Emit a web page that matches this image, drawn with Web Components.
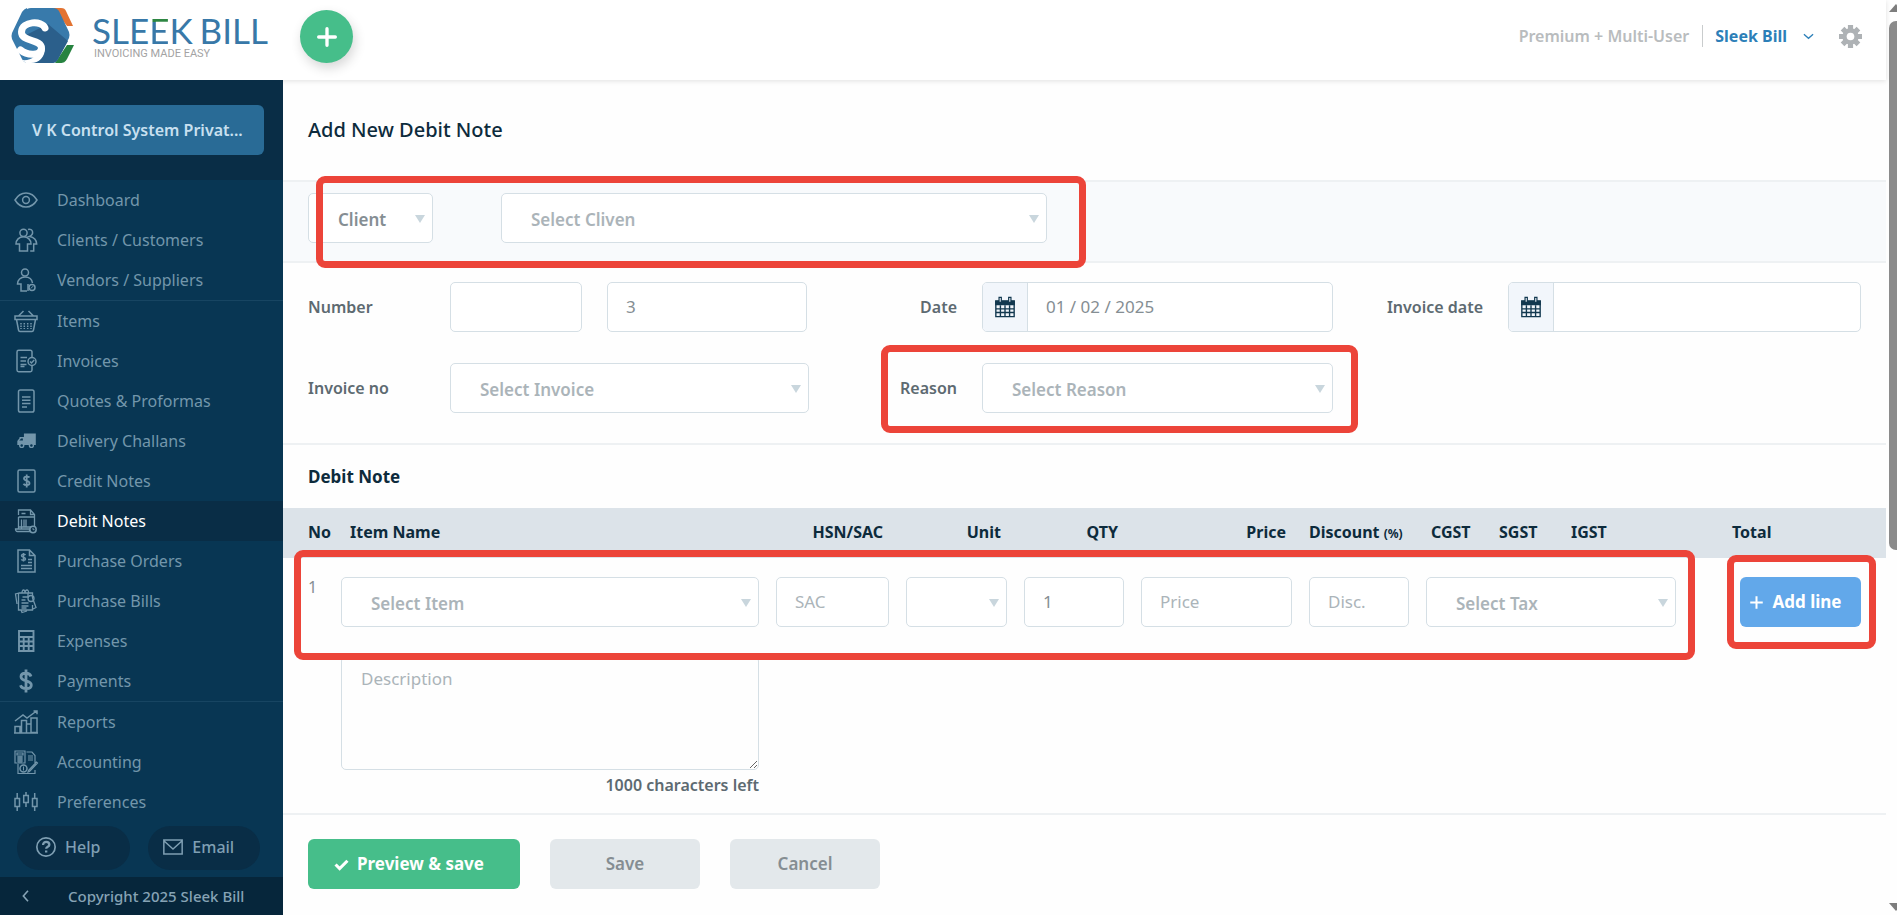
<!DOCTYPE html>
<html lang="en">
<head>
<meta charset="utf-8">
<title>Sleek Bill - Add New Debit Note</title>
<style>
    html {
        --navy: #083653;
        --navy-dark: #092d46;
        --line: #eef1f3;
        --ink: #0d2b3c;
        --muted: #5d6a71;
        --field-text: #858e93;
        --placeholder: #abb4b9;
        --field-border: #d5dfe5;
    }
    body {
        margin: 0;
        font: 16px/24px "Noto Sans", "Open Sans", sans-serif;
        color: var(--ink);
        background: #fefefe;
    }
</style>
</head>
<body>
<app-shell>
    <top-bar slot="header" plan="Premium + Multi-User" user="Sleek Bill"></top-bar>
    <side-nav slot="nav" company="V K Control System Privat...">
        <nav-item icon="eye">Dashboard</nav-item>
        <nav-item icon="clients">Clients / Customers</nav-item>
        <nav-item icon="vendor">Vendors / Suppliers</nav-item>
        <nav-item icon="basket" divided>Items</nav-item>
        <nav-item icon="invoice">Invoices</nav-item>
        <nav-item icon="quote">Quotes &amp; Proformas</nav-item>
        <nav-item icon="truck">Delivery Challans</nav-item>
        <nav-item icon="credit">Credit Notes</nav-item>
        <nav-item icon="debit" active>Debit Notes</nav-item>
        <nav-item icon="order">Purchase Orders</nav-item>
        <nav-item icon="bill">Purchase Bills</nav-item>
        <nav-item icon="calculator">Expenses</nav-item>
        <nav-item icon="dollar">Payments</nav-item>
        <nav-item icon="reports" divided>Reports</nav-item>
        <nav-item icon="accounting">Accounting</nav-item>
        <nav-item icon="sliders">Preferences</nav-item>
    </side-nav>
    <debit-form></debit-form>
</app-shell>

<script>
const ICONS = {
    eye: '<path d="M1 12C4 7 8 5 12 5s8 2 11 7c-3 5-7 7-11 7s-8-2-11-7z"/><circle cx="12" cy="12" r="3.4"/>',
    clients: '<circle cx="9.5" cy="4.8" r="3.6"/><path d="M5.5 23v-7H2c0-4 3-7.200 7.500-7.200S17 12 17 16h-3.500v7zM14 1.500c5-1.500 6.500 5 1.500 6.900 4 .6 7 3.400 7.200 7.600h-3v7h-3.500"/>',
    vendor: '<circle cx="11" cy="4.500" r="3.500"/><path d="M13 23H7v-7H3.500c0-4 3-7 7.500-7s7 2.500 7.500 6M14 16v7"/><circle cx="18" cy="19.500" r="3"/><path d="M16.800 20.500l2.400-2.400" stroke-width="1"/>',
    basket: '<path d="M1 7h22v3.500H1zM2.500 10.500l2 10.500c.2 1 .8 1.500 1.500 1.500h12c.7 0 1.300-.5 1.500-1.500l2-10.500M4.500 7l5-5M19.500 7l-5-5"/><path d="M7 14v6M10.300 14v6M13.700 14v6M17 14v6" stroke-dasharray="1.500 1"/>',
    invoice: '<path d="M18 8V3c0-1.200-.6-1.700-1.700-1.700H4.700C3.600 1.300 3 1.800 3 3v18c0 1.200.6 1.700 1.700 1.700h11.600c1.100 0 1.700-.5 1.700-1.700v-4M6.500 8.500H13M6.500 12H12M6.500 15.500H12.500M6.500 17.500h4"/><circle cx="18" cy="12.500" r="4"/><path d="M16 12.500l1.500 1.500 2.700-3"/>',
    quote: '<rect x="4.500" y="1" width="15.500" height="22" rx="1.800"/><path d="M8 8h8.500M8 11.300h8.500M8 14.600h8.500M8 18h5"/>',
    truck: '<g transform="translate(2 1) scale(.88)" stroke="none"><path d="M9 4h13.500v13H9zM4 8h5v9H4zM1.500 17v-4.500L5 8h4v9z" fill="currentColor"/><path d="M3.800 12l2-2.300h2V12z" fill="var(--navy)"/><circle cx="6.500" cy="17.500" r="3" fill="currentColor"/><circle cx="17.500" cy="17.500" r="3" fill="currentColor"/><circle cx="6.500" cy="17.500" r="1.400" fill="var(--navy)"/><circle cx="17.500" cy="17.500" r="1.400" fill="var(--navy)"/></g>',
    credit: '<rect x="4" y="1" width="17" height="22" rx="1.500"/><path d="M15.500 8.500c-.8-1.300-5.500-1.500-5.500 1 0 3 5.500 1.500 5.500 4.700 0 2.600-5 2.300-6 .5M12.700 5.500v13" stroke-width="1.800"/>',
    debit: '<path d="M4.500 6V1h12l4 4.500V18M16.500 1v4.500h4M4.500 8v12M4.500 8h16M7.500 10.500v9M10 10.500v7M4.500 18h13M7.500 4.500h4M1.500 20h14v2.500H3.500C2 22.500 1.500 21 1.500 20zM12 10.500V18" stroke-width="1.300"/><circle cx="19" cy="20.500" r="3.200"/><path d="M19 18.800v1.900h1.500" stroke-width="1"/>',
    order: '<path d="M4 1h11.500l5.500 5.500V23H4zM15.500 1v5.500H21M14 10.500h4M14 13.500h4M7 16.500h11M7 19.500h11M11.500 6c-1-1.200-4-.8-4 .8 0 2 4 1 4 3.200 0 1.800-3.300 1.700-4.200.4M9.500 4v8.500"/>',
    bill: '<path d="M5 4l-3.500 1L3 15M4.500 4h14v5M4.500 4v17h14v-5M18.500 9l3.500 9.500-3 1.500M7 21l1 2.500 5-1.500M8 4c0-4 3-4 3 0 0-4 4-4 3.500 0M8.500 8H14V4M7.500 14h7M7.500 17h7M7.500 19h5M7.500 11h4" stroke-width="1.300"/><circle cx="17" cy="9.500" r="3" stroke-width="1.300"/>',
    calculator: '<path d="M5 2h14.500v20H5zM5 8h14.500M9.700 8v14M14.700 8v14M5 12.500h14.500M5 17h14.500" stroke-width="1.900"/>',
    dollar: '<path d="M17 7.500C15.500 3 7 3.300 7 7.700c0 5.300 10.300 3 10.300 8.300 0 4.800-9.300 4.800-10.800.2M12 .5v23" stroke-width="2.800"/>',
    reports: '<path d="M1 22.500V16.500h5v6M7.500 22.500V10.500h5v12M12.500 14H17v8.500M17 22.500V8h6v14.500zM0 23h24M1 11l8-6 4 3 9.500-7M19.500 1H23v3.300"/>',
    accounting: '<path d="M1 1h10v12H1zM3 3h6v2H3zM3 7h6M3 9h6M3 11h6M5 6v7M7 6v7M12.500 2H18l3 3.500V13M14 6h5M14 8h5M14 10h5M4 14v9.500h17V20M14.500 20.500L22.500 12l1 1-8 8.500-1.500.5z" stroke-width="1.200"/><circle cx="9.500" cy="18.500" r="3.500"/><path d="M9.500 16.500v4" stroke-width="1"/>',
    sliders: '<path d="M1 8.500h4.500v8H1zM9.700 5.500h4.600v7H9.700zM18.500 8.500H23v8h-4.500zM3.200 3v5.500M3.200 16.500V21M12 2v3.500M12 12.500V17M20.700 3v5.500M20.700 16.500V21"/>',
    help: '<circle cx="12" cy="12" r="11" stroke-width="2"/><path d="M8.500 9.500c0-5 7.500-4.500 7.500-.3 0 2.600-3.800 2.500-3.800 5M12.200 16.300v2.400" stroke-width="2.800"/>',
    mail: '<path d="M1 3.500h22v17H1zM1 4.500l11 10 11-10" stroke-width="1.800"/>',
    left: '<path d="M15 4l-7 8 7 8" stroke-width="2.400"/>',
    down: '<path d="M2 7l10 9 10-9" stroke-width="2.800"/>',
    plus: '<path d="M12 2v20M2 12h20" stroke-width="4" stroke-linecap="round"/>',
    add: '<path d="M12 2v20M2 12h20" stroke-width="3.200"/>',
    check: '<path d="M2.500 12l6.500 6.500L21.500 6" stroke-width="5"/>',
    gear: '<g stroke="currentColor" stroke-width="5.400"><path d="M12 0v24M0 12h24M3.700 3.700l16.600 16.600M20.300 3.700L3.700 20.300"/></g><circle cx="12" cy="12" r="8.500" fill="currentColor" stroke="none"/><circle cx="12" cy="12" r="4" fill="#fff" stroke="none"/>',
    calendar: '<path d="M2 6h20v16.500H2zM7 10v12M12 10v12M17 10v12M2 14h20M2 18h20" stroke-width="1.500"/><path d="M1.200 4.500h21.600V10H1.200z" fill="currentColor" stroke="none"/><path d="M5.500 1.500h2.500v5.500H5.500zM16 1.500h2.500v5.500H16z" fill="#f2f6fb" stroke-width="1.300"/>'
};

class BaseElement extends HTMLElement {
    constructor() {
        super();
        this.attachShadow({ mode: 'open' });
    }

    connectedCallback() {
        this.shadowRoot.innerHTML = this.render();
    }

    attr(name, fallback = '') {
        return this.getAttribute(name) || fallback;
    }
}

class SvgIcon extends BaseElement {
    render() {
        return `
            <style>
                :host { display: block; flex: none; width: 24px; height: 24px; }
                svg { display: block; width: 100%; height: 100%; overflow: visible; }
            </style>
            <svg viewBox="0 0 24 24" fill="none" stroke="currentColor" stroke-width="1.500" aria-hidden="true">${ICONS[this.attr('name')]}</svg>
        `;
    }
}

class BrandLogo extends BaseElement {
    render() {
        return `
            <style>
                :host { display: flex; align-items: center; gap: 17px; color: #3878a8; }
                svg { display: block; width: 64px; height: 56px; }
                strong { display: flex; font: 400 35px/36px Lato, sans-serif; white-space: nowrap; }
                .accent {
                    color: transparent;
                    background: linear-gradient(#2d8642 10px, #3878a8 10px);
                    background-clip: text;
                    -webkit-background-clip: text;
                }
                .word { margin-left: 7px; }
                small { display: block; padding-left: 2px; font: 11px/12px Roboto, sans-serif; color: #a3a3a3; }
            </style>
            <svg viewBox="0 0 64 56" aria-hidden="true">
                <path d="M42 0h8c3 0 4 1 5 3l7 15h-6z" fill="#e27332"/>
                <path d="M44 55h5c4 0 5-1 7-4l7-14h-7z" fill="#278340"/>
                <path d="M16 1Q18 0 20 0h22q4 0 6 3l10 21q1 3 0 6L47 51q-2 4-6 4H17q-4 0-6-4L1 31q-1-3 0-6L11 4q2-3 5-4z" fill="#387aab"/>
                <path d="M37 16l20 17-10 18q-2 4-6 4H22q11-2 11-15L15 27z" fill="#2b5f8b"/>
                <path d="M34 20C31 12 11 13 10.500 24c-.5 10 20 7 20 16 0 8-14 8-21 2" fill="none" stroke="#fff" stroke-width="7" stroke-linecap="round"/>
                <path d="M27 40h7c0 9-6 15-14 15h-5l-4-3c9 1 16-4 16-12z" fill="#fff"/>
            </svg>
            <div>
                <strong>SLE<span class="accent">E</span>K<span class="word">BILL</span></strong>
                <small>INVOICING MADE EASY</small>
            </div>
        `;
    }
}

class TopBar extends BaseElement {
    render() {
        return `
            <style>
                :host {
                    position: relative;
                    display: flex;
                    align-items: flex-start;
                    height: 80px;
                    box-sizing: border-box;
                    padding: 8px 24px 0 11px;
                    background: #fff;
                    box-shadow: 0 1px 5px rgba(0, 0, 0, .12);
                }
                brand-logo { width: 289px; }
                button { border: 0; padding: 0; background: none; font: inherit; color: inherit; }
                .create {
                    display: grid;
                    place-items: center;
                    width: 53px;
                    height: 53px;
                    margin-top: 2px;
                    border-radius: 50%;
                    color: #fff;
                    background: #46be8a;
                    box-shadow: 2px 5px 12px rgba(0, 0, 0, .16);
                }
                .create svg-icon { width: 20px; height: 20px; }
                .account { display: flex; align-items: center; margin: 16px 0 0 auto; font-weight: 600; color: #b9bcbe; }
                .user { display: flex; align-items: center; gap: 16px; margin: 0 25px 0 12px; font-weight: 700; color: #2c7fb8; }
                .rule { width: 1px; height: 22px; margin-left: 13px; background: #c9cccd; }
                .user svg-icon { width: 11px; height: 11px; }
                .gear { width: 23px; height: 23px; color: #aeb2b5; }
                .gear svg-icon { width: 23px; height: 23px; }
            </style>
            <brand-logo></brand-logo>
            <button class="create" aria-label="Create new"><svg-icon name="plus"></svg-icon></button>
            <div class="account">
                <span>${this.attr('plan')}</span>
                <span class="rule"></span>
                <button class="user">${this.attr('user')}<svg-icon name="down"></svg-icon></button>
                <button class="gear" aria-label="Settings"><svg-icon name="gear"></svg-icon></button>
            </div>
        `;
    }
}

class NavItem extends BaseElement {
    render() {
        return `
            <style>
                :host { display: block; color: #7396ab; }
                :host([divided]) { border-top: 1px solid #174562; }
                :host([active]) { background: var(--navy-dark); }
                a { display: flex; align-items: center; gap: 19px; height: 40px; padding-left: 14px; color: inherit; text-decoration: none; white-space: nowrap; }
                :host([active]) span { color: #fff; }
            </style>
            <a href="#"><svg-icon name="${this.attr('icon')}"></svg-icon><span><slot></slot></span></a>
        `;
    }
}

class SideNav extends BaseElement {
    render() {
        return `
            <style>
                :host { display: flex; flex-direction: column; background: var(--navy); }
                .company { padding: 25px 19px 25px 14px; background: var(--navy-dark); }
                button { border: 0; font: inherit; }
                .company button {
                    display: block;
                    width: 100%;
                    height: 50px;
                    padding: 0 18px;
                    border-radius: 6px;
                    font-weight: 600;
                    text-align: left;
                    white-space: nowrap;
                    color: #c8e0f0;
                    background: #296b96;
                }
                .support { display: flex; gap: 18px; padding: 4px 23px 7px 17px; }
                .support button {
                    display: flex;
                    flex: 1;
                    align-items: center;
                    justify-content: center;
                    gap: 9px;
                    height: 44px;
                    padding: 0 14px 2px 4px;
                    border-radius: 22px;
                    font-weight: 500;
                    color: #7f9fb3;
                    background: var(--navy-dark);
                }
                .support svg-icon { width: 20px; height: 20px; }
                footer {
                    display: flex;
                    flex: 1;
                    align-items: center;
                    gap: 34px;
                    min-height: 37px;
                    padding-left: 18px;
                    font-size: 15px;
                    font-weight: 500;
                    color: #86a3b5;
                    background: #06263b;
                }
                footer button { padding: 0; color: inherit; background: none; }
                footer svg-icon { width: 16px; height: 16px; }
            </style>
            <div class="company"><button>${this.attr('company')}</button></div>
            <nav><slot></slot></nav>
            <div class="support">
                <button><svg-icon name="help"></svg-icon>Help</button>
                <button><svg-icon name="mail"></svg-icon>Email</button>
            </div>
            <footer>
                <button aria-label="Collapse menu"><svg-icon name="left"></svg-icon></button>
                <span>Copyright 2025 Sleek Bill</span>
            </footer>
        `;
    }
}

// Shared look of every form control; --label-width reserves the label column.
const FIELD_STYLE = `
    :host { display: flex; align-items: center; min-width: 0; }
    label {
        flex: none;
        box-sizing: border-box;
        width: var(--label-width);
        padding-right: 25px;
        text-align: var(--label-align, right);
        font-weight: 600;
        color: var(--muted);
    }
    .box {
        position: relative;
        display: flex;
        flex: 1;
        min-width: 0;
        height: 50px;
        box-sizing: border-box;
        overflow: hidden;
        border: 1px solid var(--field-border);
        border-radius: 5px;
        background: #fff;
    }
    input, select {
        flex: 1;
        width: 100%;
        min-width: 0;
        padding: 0 18px;
        border: 0;
        outline: 0;
        font: inherit;
        font-size: 17px;
        color: var(--field-text);
        background: none;
        appearance: none;
    }
    ::placeholder { color: var(--placeholder); opacity: 1; }
`;

class TextField extends BaseElement {
    render() {
        const label = this.attr('label');
        return `
            <style>${FIELD_STYLE}</style>
            ${label ? `<label for="control">${label}</label>` : ''}
            <div class="box">
                <input id="control" type="text" value="${this.attr('value')}" placeholder="${this.attr('placeholder')}" aria-label="${this.attr('name', label)}">
            </div>
        `;
    }
}

class DateField extends BaseElement {
    render() {
        return `
            <style>
                ${FIELD_STYLE}
                .addon { display: grid; place-items: center; width: 44px; border-right: 1px solid var(--field-border); background: #f2f6fb; color: #12384f; }
                svg-icon { width: 22px; height: 22px; }
            </style>
            <label for="control">${this.attr('label')}</label>
            <div class="box">
                <span class="addon"><svg-icon name="calendar"></svg-icon></span>
                <input id="control" type="text" value="${this.attr('value')}">
            </div>
        `;
    }
}

class SelectField extends BaseElement {
    render() {
        const label = this.attr('label');
        return `
            <style>
                ${FIELD_STYLE}
                select { padding: 3px 28px 0 29px; font-weight: 600; color: var(--placeholder); }
                :host([chosen]) select { color: var(--field-text); }
                .box::after {
                    content: "";
                    position: absolute;
                    top: 21px;
                    right: 7px;
                    border: 5px solid transparent;
                    border-top: 8px solid #c9d6dd;
                    border-bottom: 0;
                    pointer-events: none;
                }
            </style>
            ${label ? `<label for="control">${label}</label>` : ''}
            <div class="box">
                <select id="control" aria-label="${this.attr('name', label)}">
                    <option>${this.attr('value')}</option>
                </select>
            </div>
        `;
    }
}

class ActionButton extends BaseElement {
    render() {
        return `
            <style>
                :host { display: block; }
                button {
                    display: flex;
                    align-items: center;
                    justify-content: center;
                    gap: 8px;
                    width: 100%;
                    height: 50px;
                    padding: 0;
                    border: 0;
                    border-radius: 6px;
                    font: inherit;
                    font-size: 17px;
                    font-weight: 600;
                    white-space: nowrap;
                    color: #858d92;
                    background: #e3e8eb;
                }
                svg-icon { width: 15px; height: 15px; }
                :host([kind]) button { padding-right: 10px; font-weight: 700; color: #fff; }
                :host([kind="success"]) button { background: #46be8a; }
                :host([kind="info"]) button { background: #62a8ea; }
            </style>
            <button>${this.hasAttribute('icon') ? `<svg-icon name="${this.attr('icon')}"></svg-icon>` : ''}<slot></slot></button>
        `;
    }
}

// Red marker laid over the nearest positioned parent; the parent sets its inset.
class HighlightFrame extends BaseElement {
    render() {
        return `
            <style>
                :host {
                    position: absolute;
                    z-index: 1;
                    box-sizing: border-box;
                    border: 7px solid #ec4439;
                    border-radius: 9px;
                    pointer-events: none;
                }
            </style>
        `;
    }
}

class LineTable extends BaseElement {
    render() {
        return `
            <style>
                :host { display: block; position: relative; border-bottom: 2px solid var(--line); }
                table { width: 100%; table-layout: fixed; border-collapse: collapse; }
                th {
                    height: 50px;
                    padding: 0 23px 2px 0;
                    box-sizing: border-box;
                    text-align: right;
                    font-weight: 700;
                    white-space: nowrap;
                    background: #dce3e9;
                }
                th small { font-size: 12px; line-height: 12px; }
                th.start { padding-right: 0; text-align: left; }
                th.name { padding-left: 9px; }
                th.tax { padding-left: 5px; }
                td { padding: 19px 17px 0 0; vertical-align: top; }
                td.no, th.no { padding-left: 25px; }
                td.no { padding-top: 17px; color: var(--field-text); }
                td.taxes { padding-right: 56px; }
                td.add { padding: 19px 25px 0 8px; }
                textarea {
                    display: block;
                    width: 100%;
                    height: 114px;
                    box-sizing: border-box;
                    margin-top: 29px;
                    padding: 10px 19px;
                    border: 1px solid var(--field-border);
                    border-radius: 5px;
                    outline: 0;
                    font: inherit;
                    font-size: 17px;
                    color: var(--field-text);
                    background: none;
                    resize: vertical;
                }
                textarea::placeholder { color: var(--placeholder); }
                p { margin: 3px 0 16px; text-align: right; font-weight: 600; color: var(--muted); }
                .line { inset: 42px 191px auto 11px; height: 110px; }
                .button { inset: 47px 10px auto auto; width: 149px; height: 94px; }
            </style>
            <table>
                <colgroup>
                    <col width="58"><col><col width="130"><col width="118"><col width="117"><col width="168">
                    <col width="117"><col width="68"><col width="72"><col width="166"><col width="154">
                </colgroup>
                <thead>
                    <tr>
                        <th class="start no">No</th>
                        <th class="start name">Item Name</th>
                        <th>HSN/SAC</th>
                        <th>Unit</th>
                        <th>QTY</th>
                        <th>Price</th>
                        <th class="start">Discount <small>(%)</small></th>
                        <th class="start tax">CGST</th>
                        <th class="start tax">SGST</th>
                        <th class="start tax">IGST</th>
                        <th class="start">Total</th>
                    </tr>
                </thead>
                <tbody>
                    <tr>
                        <td class="no">1</td>
                        <td>
                            <select-field name="Item" value="Select Item"></select-field>
                            <textarea placeholder="Description" aria-label="Description"></textarea>
                            <p>1000 characters left</p>
                        </td>
                        <td><text-field name="HSN/SAC" placeholder="SAC"></text-field></td>
                        <td><select-field name="Unit"></select-field></td>
                        <td><text-field name="Quantity" value="1"></text-field></td>
                        <td><text-field name="Price" placeholder="Price"></text-field></td>
                        <td><text-field name="Discount" placeholder="Disc."></text-field></td>
                        <td class="taxes" colspan="3"><select-field name="Tax" value="Select Tax"></select-field></td>
                        <td class="add"><action-button kind="info" icon="add">Add line</action-button></td>
                    </tr>
                </tbody>
            </table>
            <highlight-frame class="line"></highlight-frame>
            <highlight-frame class="button"></highlight-frame>
        `;
    }
}

class DebitForm extends BaseElement {
    render() {
        return `
            <style>
                :host { display: block; }
                h1, h2 { margin: 0; padding-left: 25px; }
                h1 { font-size: 20px; line-height: 100px; font-weight: 500; }
                h2 { font-size: 17px; line-height: 63px; font-weight: 700; }
                .party { padding: 11px 25px 18px; border: solid var(--line); border-width: 2px 0; background: #f8fafc; }
                .party div { position: relative; display: flex; gap: 68px; width: fit-content; }
                .party select-field:first-child { width: 125px; }
                .party select-field:nth-child(2) { width: 546px; }
                .party highlight-frame { inset: -17px -39px -25px 8px; }
                .details {
                    display: grid;
                    grid-template-columns: 501fr 524fr 528fr;
                    row-gap: 31px;
                    padding: 19px 25px 30px;
                    border-bottom: 2px solid var(--line);
                }
                .details > * { --label-width: 173px; }
                .details > .first { --label-width: 142px; --label-align: left; }
                .details > .last { --label-width: 175px; }
                .number { display: flex; gap: 25px; }
                .number text-field:first-child { width: 274px; }
                .number text-field:last-child { width: 200px; }
                .reason { position: relative; }
                .reason highlight-frame { inset: -18px -25px -20px 72px; }
                .actions { display: flex; gap: 30px; padding: 24px 25px 24px; }
                .actions > * { width: 150px; }
                .actions [kind] { width: 212px; }
            </style>
            <h1>Add New Debit Note</h1>
            <div class="party">
                <div>
                    <select-field name="Party type" value="Client" chosen></select-field>
                    <select-field name="Client" value="Select Cliven"></select-field>
                    <highlight-frame></highlight-frame>
                </div>
            </div>
            <div class="details">
                <div class="first number">
                    <text-field label="Number"></text-field>
                    <text-field name="Number" value="3"></text-field>
                </div>
                <date-field label="Date" value="01 / 02 / 2025"></date-field>
                <date-field class="last" label="Invoice date"></date-field>
                <select-field class="first" label="Invoice no" value="Select Invoice"></select-field>
                <div class="reason">
                    <select-field label="Reason" value="Select Reason"></select-field>
                    <highlight-frame></highlight-frame>
                </div>
            </div>
            <h2>Debit Note</h2>
            <line-table></line-table>
            <div class="actions">
                <action-button kind="success" icon="check">Preview &amp; save</action-button>
                <action-button>Save</action-button>
                <action-button>Cancel</action-button>
            </div>
        `;
    }
}

class PageScrollbar extends BaseElement {
    render() {
        return `
            <style>
                :host { display: flex; flex-direction: column; box-sizing: border-box; width: 11px; padding: 4px 0 4px 3px; overflow: hidden; }
                i { flex: none; width: 14px; }
                .arrow { height: 8px; background: #7d7d7d; clip-path: polygon(50% 0, 100% 100%, 0 100%); }
                .track { flex: 1; padding-top: 9px; }
                .thumb { display: block; height: 60%; border-radius: 7px; background: #8b8b8b; }
                .down { clip-path: polygon(0 0, 100% 0, 50% 100%); }
            </style>
            <i class="arrow"></i>
            <i class="track"><i class="thumb"></i></i>
            <i class="arrow down"></i>
        `;
    }
}

class AppShell extends BaseElement {
    render() {
        return `
            <style>
                :host {
                    display: grid;
                    grid-template: auto 1fr / 283px minmax(0, 1fr) auto;
                    grid-template-areas: "header header bar" "nav main bar";
                    min-height: 100vh;
                }
                [name="header"]::slotted(*) { grid-area: header; z-index: 1; }
                [name="nav"]::slotted(*) { grid-area: nav; z-index: 2; }
                main { grid-area: main; }
                page-scrollbar { grid-area: bar; }
            </style>
            <slot name="header"></slot>
            <slot name="nav"></slot>
            <main><slot></slot></main>
            <page-scrollbar></page-scrollbar>
        `;
    }
}

customElements.define('svg-icon', SvgIcon);
customElements.define('brand-logo', BrandLogo);
customElements.define('top-bar', TopBar);
customElements.define('nav-item', NavItem);
customElements.define('side-nav', SideNav);
customElements.define('text-field', TextField);
customElements.define('date-field', DateField);
customElements.define('select-field', SelectField);
customElements.define('action-button', ActionButton);
customElements.define('highlight-frame', HighlightFrame);
customElements.define('line-table', LineTable);
customElements.define('debit-form', DebitForm);
customElements.define('page-scrollbar', PageScrollbar);
customElements.define('app-shell', AppShell);
</script>
</body>
</html>
